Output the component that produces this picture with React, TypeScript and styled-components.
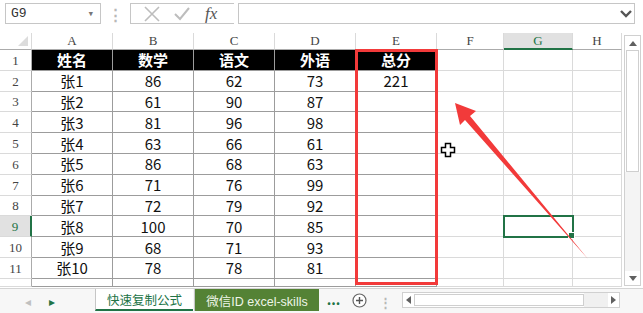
import styled, { createGlobalStyle } from 'styled-components';

const GlobalStyle = createGlobalStyle`
  html, body {
    margin: 0;
    padding: 0;
    background: #fff;
  }
`;

const COLS = ['A', 'B', 'C', 'D', 'E', 'F', 'G', 'H'];
const WIDTHS = [81, 81, 81, 81, 81, 67, 69, 49];
const HEAD = ['姓名', '数学', '语文', '外语', '总分'];
const DATA = [
  ['张1', '86', '62', '73', '221'],
  ['张2', '61', '90', '87', ''],
  ['张3', '81', '96', '98', ''],
  ['张4', '63', '66', '61', ''],
  ['张5', '86', '68', '63', ''],
  ['张6', '71', '76', '99', ''],
  ['张7', '72', '79', '92', ''],
  ['张8', '100', '70', '85', ''],
  ['张9', '68', '71', '93', ''],
  ['张10', '78', '78', '81', ''],
];

export default function App() {
  const rows = [HEAD, ...DATA];
  return (
    <Window>
      <GlobalStyle />
      <FormulaBar>
        <NameBox>
          <span>G9</span>
          <SmallArrow>▾</SmallArrow>
        </NameBox>
        <VDots>⋮</VDots>
        <FxBox>
          <svg width="18" height="18" viewBox="0 0 18 18">
            <path d="M2 2 L16 16 M16 2 L2 16" stroke="#bdbdbd" strokeWidth="1.6" fill="none" />
          </svg>
          <svg width="18" height="18" viewBox="0 0 18 18">
            <path d="M2 9 L7 14 L16 3" stroke="#bdbdbd" strokeWidth="2" fill="none" />
          </svg>
          <FxText>fx</FxText>
        </FxBox>
        <FormulaInput>
          <svg width="12" height="8" viewBox="0 0 12 8">
            <path d="M1 1 L6 6 L11 1" stroke="#555" strokeWidth="2.4" fill="none" />
          </svg>
        </FormulaInput>
      </FormulaBar>

      <Sheet>
        <Grid>
          <HeaderRow>
            <Corner>
              <svg width="10" height="10" viewBox="0 0 10 10">
                <path d="M10 0 L10 10 L0 10 Z" fill="#dcdcdc" />
              </svg>
            </Corner>
            {COLS.map((c, i) => (
              <ColHead key={c} $w={WIDTHS[i]} $active={c === 'G'}>
                {c}
              </ColHead>
            ))}
          </HeaderRow>
          {rows.map((r, ri) => (
            <Row key={ri}>
              <RowHead $active={ri + 1 === 9}>{ri + 1}</RowHead>
              {COLS.map((c, ci) => (
                <Cell
                  key={c}
                  $w={WIDTHS[ci]}
                  $kind={ci > 4 ? 'empty' : ri === 0 ? 'head' : 'data'}
                  $selected={c === 'G' && ri + 1 === 9}
                >
                  {ci <= 4 ? r[ci] : ''}
                </Cell>
              ))}
            </Row>
          ))}
          <Row $partial>
            <RowHead />
            {COLS.map((c, ci) => (
              <Cell key={c} $w={WIDTHS[ci]} $kind={ci > 4 ? 'empty' : 'data'} />
            ))}
          </Row>
        </Grid>
        <VScroll>
          <ScrollBtn>
            <svg width="8" height="5" viewBox="0 0 8 5">
              <path d="M0 5 L4 0 L8 5 Z" fill="#606060" />
            </svg>
          </ScrollBtn>
          <VThumb />
          <VTrack />
          <ScrollBtn>
            <svg width="8" height="5" viewBox="0 0 8 5">
              <path d="M0 0 L4 5 L8 0 Z" fill="#606060" />
            </svg>
          </ScrollBtn>
        </VScroll>
      </Sheet>

      <TabBar>
        <NavArrows>
          <NavArrow $color="#c0c0c0">◂</NavArrow>
          <NavArrow $color="#217346">▸</NavArrow>
        </NavArrows>
        <SheetTab $active>快速复制公式</SheetTab>
        <SheetTab>微信ID excel-skills</SheetTab>
        <More>...</More>
        <AddSheet>
          <svg width="15" height="15" viewBox="0 0 15 15">
            <circle cx="7.5" cy="7.5" r="6.5" stroke="#666" strokeWidth="1.2" fill="#fff" />
            <path d="M7.5 4 V11 M4 7.5 H11" stroke="#555" strokeWidth="1.4" />
          </svg>
        </AddSheet>
        <VDots $small>⋮</VDots>
        <HScroll>
          <HBtn>
            <svg width="5" height="8" viewBox="0 0 5 8">
              <path d="M5 0 L0 4 L5 8 Z" fill="#606060" />
            </svg>
          </HBtn>
          <HThumb />
          <HTrack />
          <HBtn>
            <svg width="5" height="8" viewBox="0 0 5 8">
              <path d="M0 0 L5 4 L0 8 Z" fill="#606060" />
            </svg>
          </HBtn>
        </HScroll>
      </TabBar>

      <RedBox />
      <Arrow width="643" height="313" viewBox="0 0 643 313">
        <polygon
          points="455,103 476,111 470,116 588,259 465,120 460,125"
          fill="#f23a3a"
        />
      </Arrow>
      <Cursor width="16" height="16" viewBox="0 0 16 16">
        <path
          d="M5.5 1.5 H10.5 V5.5 H14.5 V10.5 H10.5 V14.5 H5.5 V10.5 H1.5 V5.5 H5.5 Z"
          fill="#fff"
          stroke="#000"
          strokeWidth="1.5"
        />
      </Cursor>
    </Window>
  );
}

const Window = styled.div`
  position: relative;
  width: 643px;
  height: 313px;
  overflow: hidden;
  background: #fff;
  font-family: 'Noto Sans CJK SC', 'Noto Sans', sans-serif;
`;

const FormulaBar = styled.div`
  display: flex;
  align-items: center;
  height: 21px;
  padding: 3px 0 0 5px;
`;

const NameBox = styled.div`
  display: flex;
  align-items: center;
  justify-content: space-between;
  box-sizing: border-box;
  width: 96px;
  height: 21px;
  padding: 0 6px 0 5px;
  border: 1px solid #c6c6c6;
  font-family: 'Liberation Mono', monospace;
  font-size: 13px;
  color: #333;
`;

const SmallArrow = styled.span`
  font-size: 11px;
  color: #777;
`;

const VDots = styled.span<{ $small?: boolean }>`
  width: ${(p) => (p.$small ? '30px' : '29px')};
  align-self: center;
  text-align: center;
  color: #b8b8b8;
  font-size: ${(p) => (p.$small ? '13px' : '15px')};
  font-weight: bold;
`;

const FxBox = styled.div`
  display: flex;
  align-items: center;
  gap: 12px;
  box-sizing: border-box;
  width: 104px;
  height: 21px;
  padding: 0 0 0 12px;
  border: 1px solid #c6c6c6;
  border-right: none;
`;

const FxText = styled.span`
  font-family: 'Liberation Serif', serif;
  font-style: italic;
  font-size: 17px;
  color: #555;
  margin-left: 2px;
`;

const FormulaInput = styled.div`
  flex: 1;
  display: flex;
  align-items: center;
  justify-content: flex-end;
  box-sizing: border-box;
  height: 21px;
  margin: 0 8px 0 4px;
  padding-right: 2px;
  border: 1px solid #c6c6c6;
`;

const Sheet = styled.div`
  display: flex;
  margin-top: 9px;
  height: 254px;
`;

const Grid = styled.div`
  width: 622px;
  display: flex;
  flex-direction: column;
  overflow: hidden;
`;

const HeaderRow = styled.div`
  display: flex;
  height: 17px;
  flex: none;
`;

const Corner = styled.div`
  box-sizing: border-box;
  width: 32px;
  display: flex;
  align-items: flex-end;
  justify-content: flex-end;
  padding: 0 3px 3px 0;
  border-right: 1px solid #dadada;
  border-bottom: 1px solid #ababab;
`;

const ColHead = styled.div<{ $w: number; $active?: boolean }>`
  box-sizing: border-box;
  width: ${(p) => p.$w}px;
  flex: none;
  text-align: center;
  font-family: 'Liberation Serif', serif;
  font-size: 13px;
  line-height: 16px;
  color: ${(p) => (p.$active ? '#217346' : '#444')};
  background: ${(p) => (p.$active ? '#e1e1e1' : '#fff')};
  border-right: 1px solid #dadada;
  border-bottom: ${(p) => (p.$active ? '2px solid #217346' : '1px solid #ababab')};
`;

const Row = styled.div<{ $partial?: boolean }>`
  display: flex;
  flex: none;
  height: ${(p) => (p.$partial ? '8px' : '20.8px')};
`;

const RowHead = styled.div<{ $active?: boolean }>`
  box-sizing: border-box;
  width: 32px;
  flex: none;
  display: flex;
  align-items: flex-end;
  justify-content: center;
  padding-bottom: 1px;
  font-family: 'Liberation Serif', serif;
  font-size: 13px;
  color: ${(p) => (p.$active ? '#217346' : '#444')};
  background: ${(p) => (p.$active ? '#e1e1e1' : '#fff')};
  border-bottom: 1px solid #dadada;
  border-right: ${(p) => (p.$active ? '2px solid #217346' : '1px solid #ababab')};
`;

const Cell = styled.div<{ $w: number; $kind: 'head' | 'data' | 'empty'; $selected?: boolean }>`
  position: relative;
  box-sizing: border-box;
  width: ${(p) => p.$w}px;
  flex: none;
  display: flex;
  align-items: center;
  justify-content: center;
  font-size: 15px;
  font-weight: ${(p) => (p.$kind === 'head' ? 700 : 400)};
  color: ${(p) => (p.$kind === 'head' ? '#fff' : '#111')};
  background: ${(p) => (p.$kind === 'head' ? '#000' : '#fff')};
  border-right: 1px solid ${(p) => (p.$kind === 'empty' ? '#dadada' : '#9c9c9c')};
  border-bottom: 1px solid ${(p) => (p.$kind === 'empty' ? '#dadada' : '#9c9c9c')};
  ${(p) =>
    p.$selected &&
    `
    outline: 2px solid #217346;
    outline-offset: -1px;
    z-index: 1;
    &::after {
      content: '';
      position: absolute;
      right: -3px;
      bottom: -3px;
      width: 5px;
      height: 5px;
      background: #217346;
      border: 1px solid #fff;
    }
  `}
`;

const VScroll = styled.div`
  box-sizing: border-box;
  width: 17px;
  margin: 2px 0 0 2px;
  height: 251px;
  display: flex;
  flex-direction: column;
  border: 1px solid #d0d0d0;
  background: #fff;
`;

const ScrollBtn = styled.div`
  height: 14px;
  display: flex;
  align-items: center;
  justify-content: center;
  flex: none;
`;

const VThumb = styled.div`
  margin: 0 1px;
  height: 120px;
  border: 1px solid #cfcfcf;
  background: #fff;
`;

const VTrack = styled.div`
  flex: 1;
  background: #f4f4f4;
`;

const TabBar = styled.div`
  display: flex;
  align-items: flex-start;
  height: 25px;
  margin-top: 1px;
  border-top: 1px solid #d4d4d4;
  background: #f7f7f7;
`;

const NavArrows = styled.div`
  box-sizing: border-box;
  width: 95px;
  height: 22px;
  display: flex;
  align-items: center;
  gap: 18px;
  padding-left: 25px;
`;

const NavArrow = styled.span<{ $color: string }>`
  color: ${(p) => p.$color};
  font-size: 12px;
`;

const SheetTab = styled.div<{ $active?: boolean }>`
  box-sizing: border-box;
  display: flex;
  align-items: center;
  justify-content: center;
  height: 22px;
  font-family: 'Liberation Sans', 'Noto Sans CJK SC', sans-serif;
  font-size: 12.5px;
  color: ${(p) => (p.$active ? '#217346' : '#eef5e8')};
  background: ${(p) => (p.$active ? '#fff' : '#548235')};
  border-left: 1px solid #c6c6c6;
  border-bottom: ${(p) => (p.$active ? '2px solid #217346' : 'none')};
  width: ${(p) => (p.$active ? '98px' : '125px')};
  margin-right: ${(p) => (p.$active ? '1px' : '0')};
  white-space: nowrap;
`;

const More = styled.div`
  width: 29px;
  height: 22px;
  text-align: center;
  font-size: 14px;
  font-weight: bold;
  color: #217346;
  line-height: 20px;
`;

const AddSheet = styled.div`
  width: 22px;
  height: 22px;
  display: flex;
  align-items: center;
  justify-content: center;
`;

const HScroll = styled.div`
  box-sizing: border-box;
  width: 218px;
  height: 16px;
  margin: 3px 0 0 2px;
  display: flex;
  border: 1px solid #d0d0d0;
  background: #fff;
`;

const HBtn = styled.div`
  width: 11px;
  display: flex;
  align-items: center;
  justify-content: center;
  flex: none;
`;

const HThumb = styled.div`
  width: 168px;
  margin: 1px 0;
  border: 1px solid #cfcfcf;
`;

const HTrack = styled.div`
  flex: 1;
  background: #f0f0f0;
`;

const RedBox = styled.div`
  position: absolute;
  z-index: 2;
  left: 355px;
  top: 49px;
  width: 83px;
  height: 236px;
  box-sizing: border-box;
  border: 3px solid #f23a3a;
  pointer-events: none;
`;

const Arrow = styled.svg`
  position: absolute;
  z-index: 3;
  left: 0;
  top: 0;
  pointer-events: none;
`;

const Cursor = styled.svg`
  position: absolute;
  z-index: 3;
  left: 440px;
  top: 142px;
`;
